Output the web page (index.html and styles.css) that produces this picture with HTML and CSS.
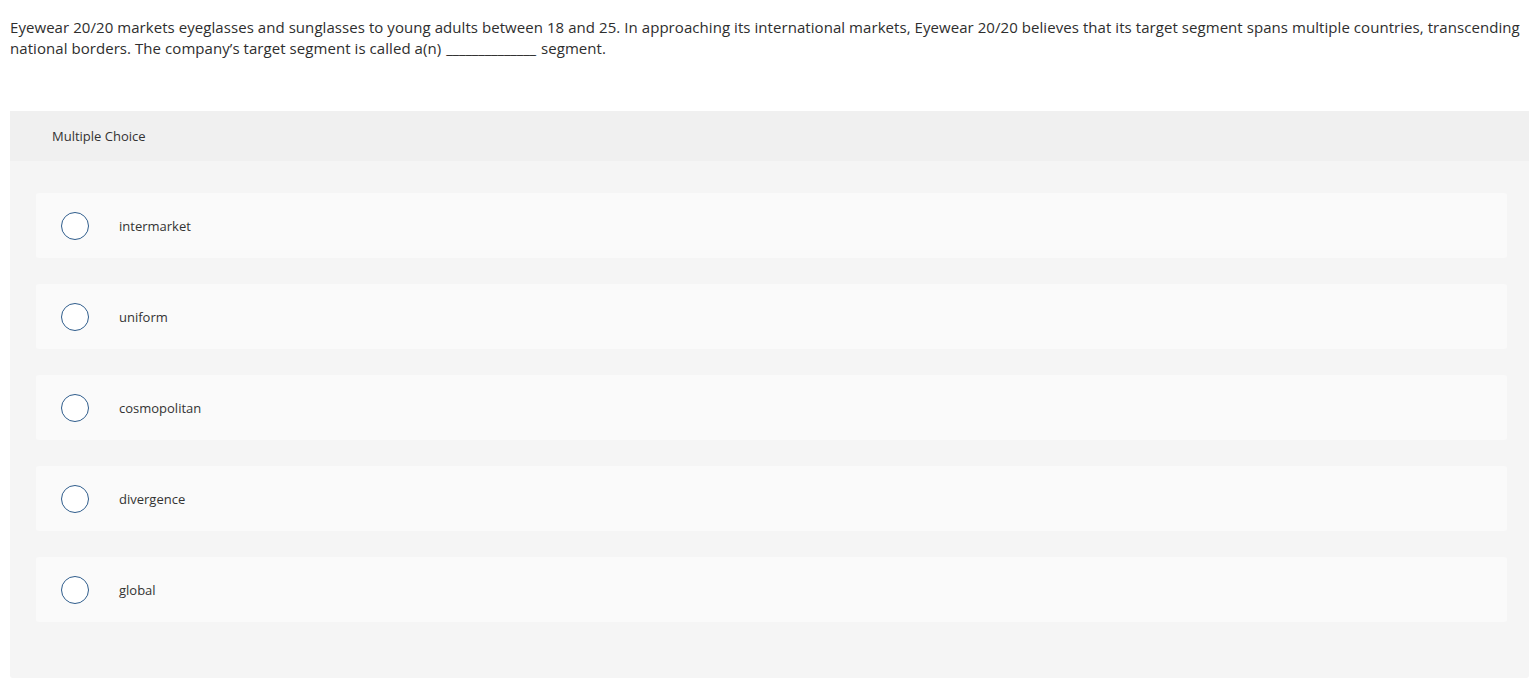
FILE: index.html
```html
<!DOCTYPE html>
<html>
<head>
<meta charset="utf-8">
<link rel="stylesheet" href="styles.css">
</head>
<body>
<div class="page">
  <p class="question">Eyewear 20/20 markets eyeglasses and sunglasses to young adults between 18 and 25. In approaching its international markets, Eyewear 20/20 believes that its target segment spans multiple countries, transcending national borders. The company’s target segment is called a(n) <span class="blank">______________</span> segment.</p>
  <div class="mc">
    <div class="mc-header">Multiple Choice</div>
    <div class="mc-body">
      <div class="option"><span class="radio"></span><span class="label">intermarket</span></div>
      <div class="option"><span class="radio"></span><span class="label">uniform</span></div>
      <div class="option"><span class="radio"></span><span class="label">cosmopolitan</span></div>
      <div class="option"><span class="radio"></span><span class="label">divergence</span></div>
      <div class="option"><span class="radio"></span><span class="label">global</span></div>
    </div>
  </div>
</div>
</body>
</html>
```
FILE: styles.css
```css
html, body {
  margin: 0;
  padding: 0;
  background: #ffffff;
}
body {
  font-family: "Open Sans", "Liberation Sans", sans-serif;
  color: #333333;
}
.page {
  padding: 17px 1px 0 10px;
}
.question {
  margin: 0;
  font-size: 15px;
  line-height: 21px;
  letter-spacing: 0.06px;
  color: #2e2e2e;
  padding-right: 4px;
}
.blank {
  display: inline-block;
  letter-spacing: -0.15px;
  margin: 0 1px;
}
.mc {
  margin-top: 52px;
  background: #f5f5f5;
  border-radius: 0 0 3px 3px;
}
.mc-header {
  background: #f0f0f0;
  height: 50px;
  display: flex;
  align-items: center;
  padding-left: 42px;
  font-size: 13px;
  color: #333333;
}
.mc-body {
  padding: 32px 22px 56px 26px;
  display: flex;
  flex-direction: column;
  gap: 26px;
}
.option {
  height: 65px;
  background: #fafafa;
  border-radius: 3px;
  display: flex;
  align-items: center;
  padding-left: 25px;
}
.radio {
  width: 26px;
  height: 26px;
  border: 1.5px solid #2f5d8c;
  border-radius: 50%;
  background: #ffffff;
  flex: none;
}
.label {
  margin-left: 30px;
  font-size: 13px;
  color: #333333;
}
```
